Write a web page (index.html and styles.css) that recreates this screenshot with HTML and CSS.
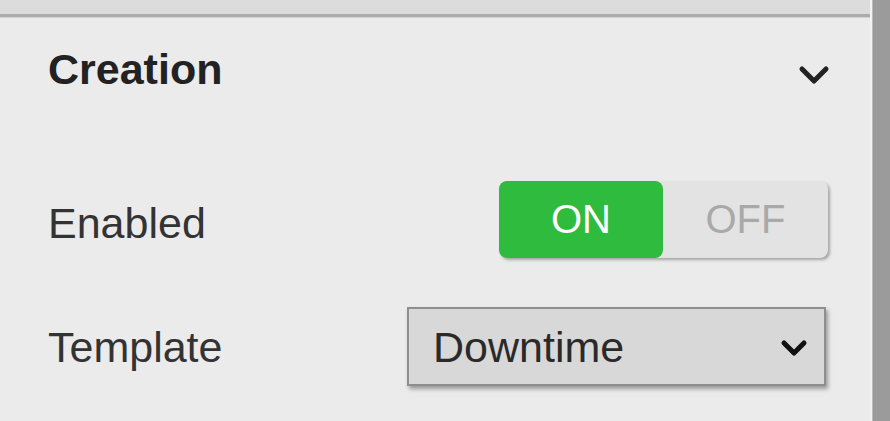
FILE: index.html
```html
<!DOCTYPE html>
<html>
<head>
<meta charset="utf-8">
<link rel="stylesheet" href="styles.css">
</head>
<body>
<div class="page">
  <div class="panel">
    <div class="topstrip"></div>
    <div class="section">
      <div class="header">
        <div class="title">Creation</div>
        <svg class="chev" width="32" height="24" viewBox="0 0 32 24"><path d="M4 5 L16 17 L28 5" fill="none" stroke="#222" stroke-width="5" stroke-linecap="round" stroke-linejoin="round"/></svg>
      </div>
      <div class="row row-enabled">
        <div class="label label-enabled">Enabled</div>
        <div class="toggle">
          <div class="seg on">ON</div>
          <div class="seg off">OFF</div>
        </div>
      </div>
      <div class="row row-template">
        <div class="label label-template">Template</div>
        <div class="select">
          <span class="select-text">Downtime</span>
          <svg class="select-chev" width="28" height="20" viewBox="0 0 28 20"><path d="M4 5 L14 15 L24 5" fill="none" stroke="#111" stroke-width="5" stroke-linecap="round" stroke-linejoin="round"/></svg>
        </div>
      </div>
    </div>
  </div>
  <div class="edge"></div>
  <div class="bar"></div>
</div>
</body>
</html>
```
FILE: styles.css
```css
html, body {
  margin: 0;
  padding: 0;
  background: #ebebeb;
}
body {
  font-family: "Liberation Sans", Arial, sans-serif;
  width: 890px;
  height: 421px;
  overflow: hidden;
}
.page {
  display: flex;
  height: 421px;
}
.panel {
  width: 870px;
  background: #ebebeb;
  display: flex;
  flex-direction: column;
}
.edge {
  width: 2px;
  background: #f3f3f3;
  border-right: 1px solid #bcbcbc;
}
.bar {
  flex: 1;
  background: #9b9b9b;
}
.topstrip {
  height: 14px;
  background: #dcdcdc;
  border-bottom: 3px solid #adadad;
  box-shadow: 0 1px 0 #d2d2d2;
}
.section {
  padding: 28px 42px 0 48px;
}
.header {
  display: flex;
  justify-content: space-between;
  align-items: flex-start;
  height: 48px;
}
.title {
  font-size: 43px;
  line-height: 48px;
  font-weight: bold;
  color: #222;
}
.chev {
  margin-top: 19px;
  margin-right: -2px;
}
.row {
  display: flex;
  justify-content: space-between;
  align-items: flex-start;
}
.row-enabled {
  margin-top: 88px;
}
.label {
  font-size: 43px;
  line-height: 48px;
  color: #333;
}
.label-enabled {
  padding-top: 18px;
}
.label-template {
  padding-top: 16px;
}
.toggle {
  display: flex;
  width: 329px;
  height: 77px;
  border-radius: 8px;
  background: #e3e3e3;
  box-shadow: 2px 2px 3px rgba(0, 0, 0, 0.3);
}
.seg {
  display: flex;
  align-items: center;
  justify-content: center;
  font-size: 40px;
}
.on {
  width: 164px;
  background: #2fbb3e;
  color: #fff;
  border-radius: 8px;
}
.off {
  flex: 1;
  color: #a9a9a9;
}
.row-template {
  margin-top: 49px;
}
.select {
  box-sizing: border-box;
  width: 419px;
  height: 79px;
  border: 2px solid #8e8e8e;
  background: #d8d8d8;
  box-shadow: 2px 3px 4px rgba(0, 0, 0, 0.35);
  display: flex;
  align-items: center;
  justify-content: space-between;
  padding: 0 16px 0 24px;
  margin-right: 2px;
}
.select-text {
  font-size: 43px;
  color: #2a2a2a;
  line-height: 48px;
}
.select-chev {
  margin-top: 2px;
}
```
